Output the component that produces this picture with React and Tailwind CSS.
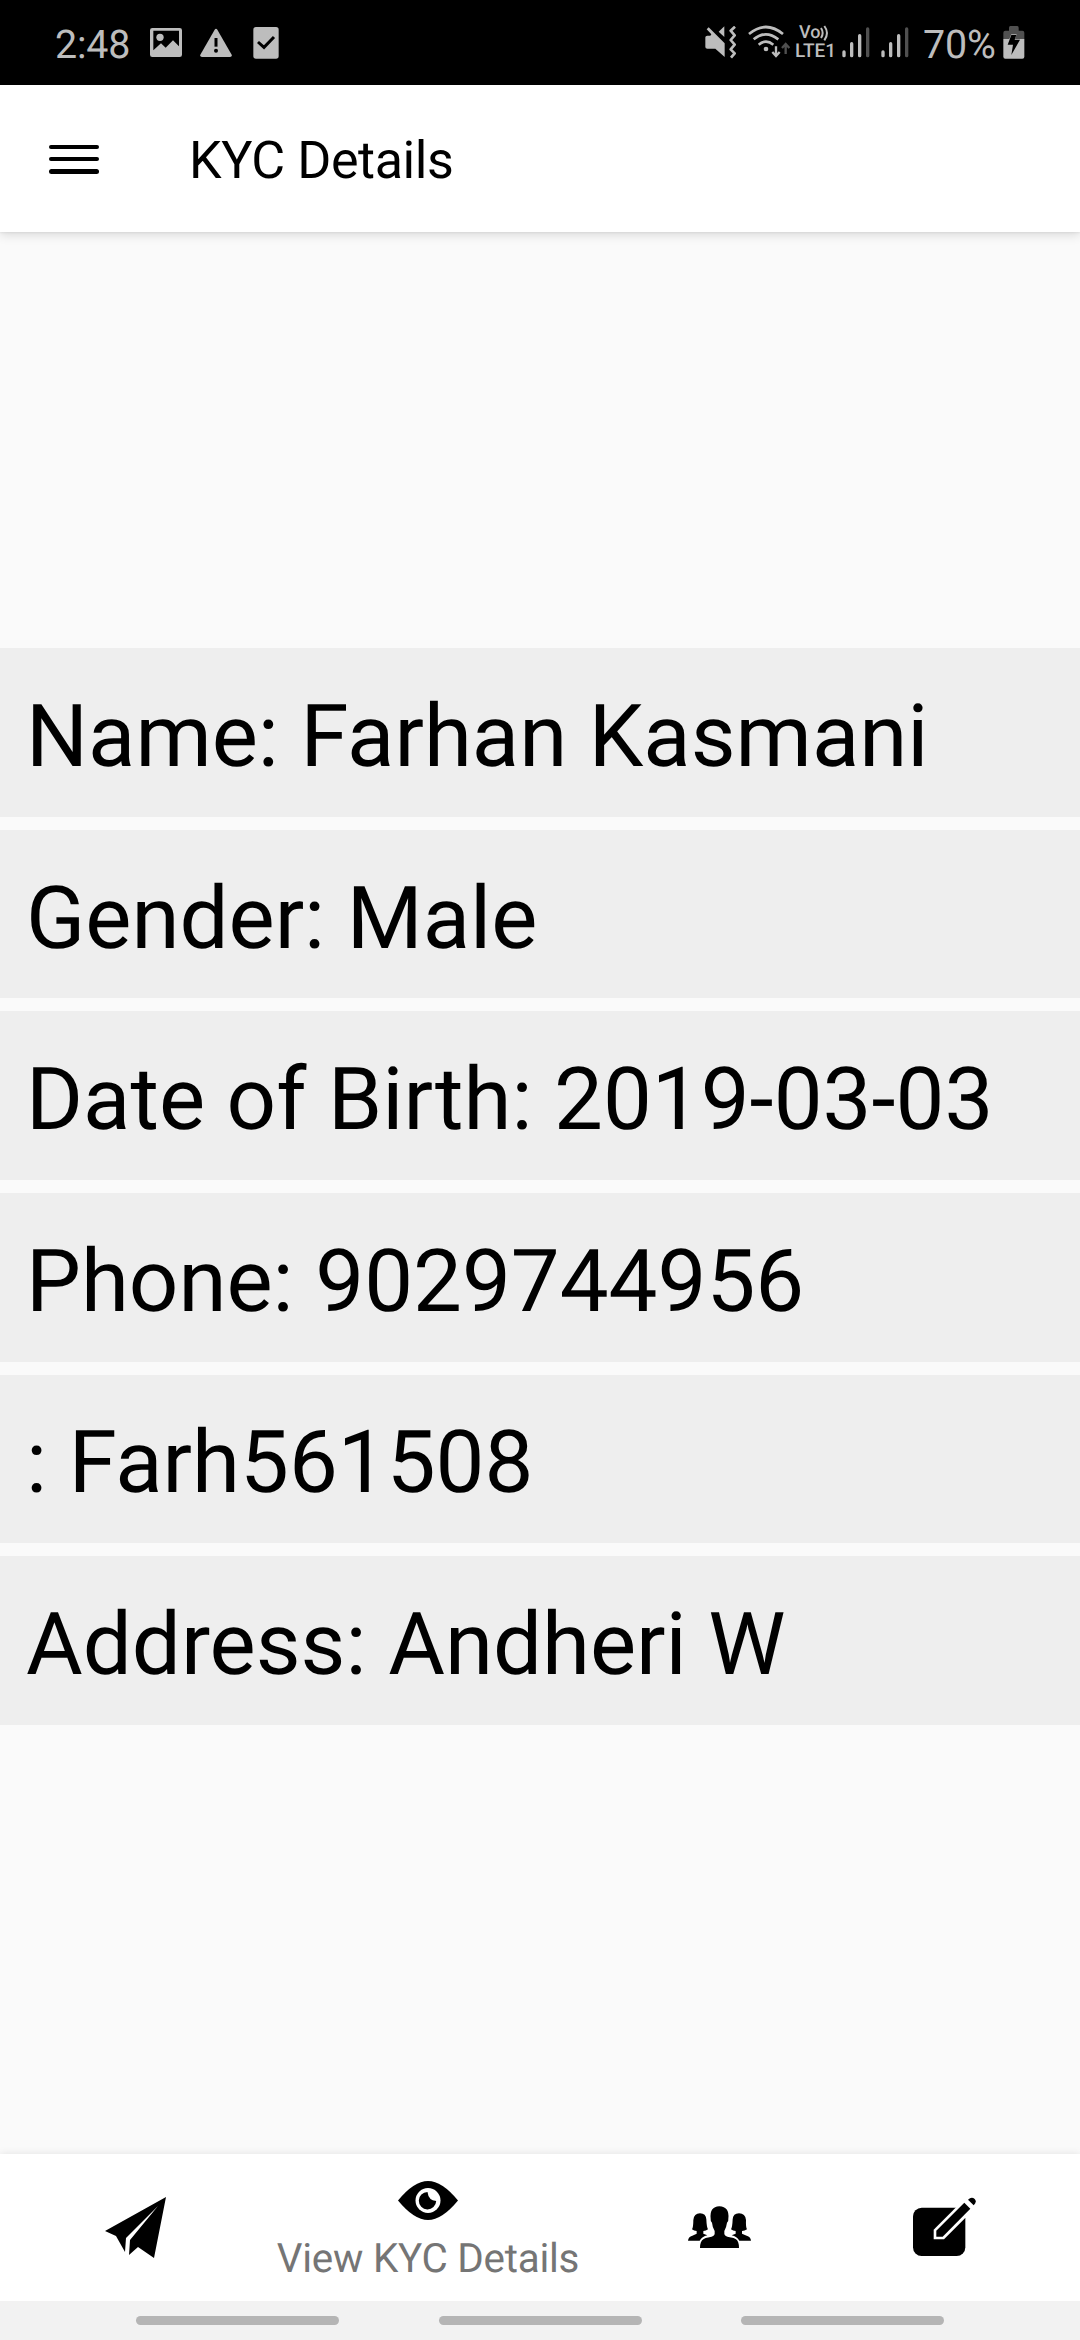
const ROWS = [
  'Name: Farhan Kasmani',
  'Gender: Male',
  'Date of Birth: 2019-03-03',
  'Phone: 9029744956',
  ': Farh561508',
  'Address: Andheri W',
];

function StatusBar() {
  return (
    <div className="flex h-[85px] shrink-0 items-start bg-black text-[#bdbdbd]">
      <span className="ml-[55px] mt-[21px] w-[95px] shrink-0 whitespace-nowrap text-[39.4px] leading-[48px] tracking-[-0.2px]">2:48</span>
      <svg className="mt-[28px] h-[30px] w-[32px] shrink-0" viewBox="450 84 96 90" fill="currentColor">
        <path fillRule="evenodd" d="M457 84H539Q546 84 546 91V164Q546 171 539 171H457Q450 171 450 164V91Q450 84 457 84ZM460 92V151L483 130L497 143L519 121L537 139V92Z" />
        <circle cx="480" cy="112" r="11" />
      </svg>
      <svg className="ml-[18px] mt-[28px] h-[30px] w-[32px] shrink-0" viewBox="600 84 96 90">
        <path fill="currentColor" d="M644 89Q648 84 652 89L695 164Q697 171 690 171H606Q599 171 601 164Z" />
        <path stroke="#000" strokeWidth="9" d="M648 114V140" />
        <circle cx="648" cy="152" r="6" fill="#000" />
      </svg>
      <svg className="ml-[21px] mt-[27px] h-[32px] w-[26px] shrink-0" viewBox="759 81 78 96">
        <rect x="760" y="81" width="76" height="95" rx="8" fill="currentColor" />
        <path d="M774 126L792 142L822 111" fill="none" stroke="#000" strokeWidth="9" />
      </svg>
      <svg className="ml-[426px] mt-[26px] h-[33px] w-[31px] shrink-0" viewBox="76 78 93 99" fill="currentColor">
        <path d="M77 112Q77 107 83 107H92L95 103L81 88L87 82L135 130V171L107 146H83Q77 146 77 141Z" />
        <path d="M134 79V111L117 95Z" />
        <path d="M166 80L153 92L165 106L153 120L165 134L153 148L165 160L154 173" fill="none" stroke="currentColor" strokeWidth="8" strokeLinejoin="round" />
      </svg>
      <svg className="ml-[12px] mt-[25px] h-[34px] w-[42px] shrink-0" viewBox="205 75 126 102" fill="none" stroke="currentColor" strokeWidth="8">
        <path d="M208 102Q258 60 310 102M222 118Q258 88 296 118M237 134Q259 116 281 134" />
        <circle cx="259" cy="147" r="7" fill="currentColor" stroke="none" />
        <path d="M289 139V167M278 156L289 168L300 156" strokeWidth="7" />
        <path d="M318 162V133M307 144L318 132L329 144" stroke="#505050" strokeWidth="7" />
      </svg>
      <div className="ml-[5px] mt-[25px] flex w-[47px] shrink-0 flex-col font-medium">
        <div className="flex h-[16px] items-start pl-[4px]">
          <span className="text-[18px] leading-[16px]">Vo</span>
          <svg className="h-[17px] w-[11px] shrink-0" viewBox="0 0 33 51" fill="none" stroke="currentColor" strokeWidth="6">
            <path d="M3 9Q13 24 3 39M13 3Q29 24 13 46" />
          </svg>
        </div>
        <span className="whitespace-nowrap text-[19px] leading-[20px]">LTE1</span>
      </div>
      {[0, 1].map((i) => (
        <svg key={i} className="mr-[11px] mt-[27px] h-[31px] w-[28px] shrink-0" viewBox="488 81 84 93" strokeWidth="10" strokeLinecap="round" stroke="currentColor">
          <path d="M494 156V167M517 131V167M541 107V167" />
          <path d="M565 87V167" stroke="#505050" />
        </svg>
      ))}
      <span className="ml-[3px] mt-[21px] w-[80px] shrink-0 whitespace-nowrap text-[39.4px] leading-[48px] tracking-[-0.2px]">70%</span>
      <svg className="mt-[26px] h-[33px] w-[22px] shrink-0" viewBox="971 78 66 99">
        <path fill="#505050" d="M989 83Q989 78 993 78H1014Q1018 78 1018 83V92H1029Q1035 92 1035 98V118H972V98Q972 92 978 92H989Z" />
        <path fill="currentColor" d="M972 117H1035V170Q1035 176 1029 176H978Q972 176 972 170Z" />
        <path fill="currentColor" d="M996 103H1012L1007 117H990Z" />
        <path fill="#000" d="M996 105H1011L1006 119H1022L996 165L1001 134H985Z" />
      </svg>
    </div>
  );
}

function AppBar() {
  return (
    <header className="z-10 flex h-[147px] shrink-0 items-center bg-white shadow-[0_3px_10px_rgba(0,0,0,0.13),0_1px_2px_rgba(0,0,0,0.06)]">
      <div className="ml-[49px] mt-[1px] flex h-[29px] w-[50px] flex-col justify-between">
        <div className="h-[4.5px] rounded-full bg-black" />
        <div className="h-[4.5px] rounded-full bg-black" />
        <div className="h-[4.5px] rounded-full bg-black" />
      </div>
      <h1 className="ml-[90px] mt-[4px] text-[52px] leading-[62px] tracking-[-0.42px]">KYC Details</h1>
    </header>
  );
}

function BottomNav() {
  return (
    <nav className="flex h-[147px] shrink-0 items-start bg-white shadow-[0_0_8px_rgba(0,0,0,0.10)]">
      <svg className="ml-[104px] mt-[42px] h-[63px] w-[63px] shrink-0" viewBox="0 0 63 63">
        <path d="M62 1L50 62L34 51L25 59L26 44L54 10L22 42L21 56L12 40L1 35Z" />
      </svg>
      <div className="ml-[107px] flex w-[308px] flex-col items-center">
        <svg className="mt-[26px] h-[42px] w-[62px] shrink-0" viewBox="0 0 62 42">
          <path d="M1 20.5Q17 1 31 1T61 20.5Q45 40 31 40T1 20.5Z" />
          <circle cx="31" cy="20.5" r="12.5" fill="#fff" />
          <path d="M30.5 12A8.7 8.7 0 1 0 39.2 21Q31.5 20.5 30.5 12Z" />
        </svg>
        <span className="mt-[13px] whitespace-nowrap text-[40.4px] leading-[48px] tracking-[-0.24px] text-[#757575]">View KYC Details</span>
      </div>
      <svg className="ml-[106px] mt-[52px] h-[43px] w-[64px] shrink-0" viewBox="201 228 192 129">
        <path d="M201 332Q202 320 214 317L227 311V303Q219 303 213 298Q217 292 217 270Q219 250 237 250Q255 250 256 268Q257 292 261 298Q255 303 247 303V311L259 316Q243 320 236 332Z" />
        <path d="M390 332Q389 320 377 317L363 311V303Q371 303 378 298Q374 292 375 270Q373 250 354 250Q336 250 335 268Q334 292 330 298Q336 303 344 303V311L332 316Q348 320 355 332Z" />
        <path d="M237 354Q237 334 247 328Q252 324 265 322Q280 319 281 312V303Q274 291 273 278Q268 275 269 266Q265 230 295 229Q326 230 322 266Q323 275 318 278Q316 293 310 303V312Q311 319 326 322Q340 324 345 328Q354 334 354 354Z" />
      </svg>
      <svg className="ml-[161px] mt-[43px] h-[61px] w-[64px] shrink-0" viewBox="876 203 192 183">
        <rect x="876" y="235" width="157" height="145" rx="26" />
        <path d="M1006 233L938 301V330H969L1035 264V233Z" fill="#fff" />
        <path d="M946 304L1030 220L1048 238L965 322H946Z" />
        <path d="M1041 211Q1052 200 1061 209Q1069 218 1058 228Z" />
      </svg>
    </nav>
  );
}

export default function App() {
  return (
    <div className="flex h-[2340px] w-[1080px] flex-col overflow-hidden bg-[#fafafa] font-[Roboto,sans-serif] text-black [text-rendering:geometricPrecision]">
      <StatusBar />
      <AppBar />
      <main className="flex flex-1 flex-col justify-center gap-[13px] pb-[13px]">
        {ROWS.map((row) => (
          <div key={row} className="flex h-[168.6px] items-center bg-[#eeeeee] pl-[26px]">
            <span className="mt-[9px] whitespace-nowrap text-[87px] leading-[102px]">{row}</span>
          </div>
        ))}
      </main>
      <BottomNav />
      <div className="flex h-[39px] shrink-0 items-center justify-center gap-[99.5px] bg-[#f2f2f2]">
        <div className="h-[9px] w-[203px] rounded-full bg-[#b5b5b5]" />
        <div className="h-[9px] w-[203px] rounded-full bg-[#b5b5b5]" />
        <div className="h-[9px] w-[203px] rounded-full bg-[#b5b5b5]" />
      </div>
    </div>
  );
}
